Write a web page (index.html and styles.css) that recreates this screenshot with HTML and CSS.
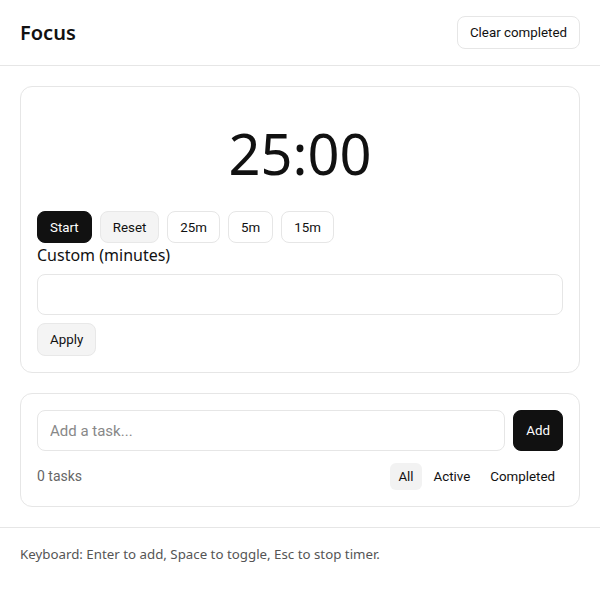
FILE: index.html
```html
<!DOCTYPE html>
<html lang="en">
<head>
<meta charset="utf-8">
<title>Focus</title>
<link rel="stylesheet" href="styles.css">
</head>
<body>
<header class="topbar">
  <h1 class="title">Focus</h1>
  <button class="btn btn-head">Clear completed</button>
</header>
<main class="main">
  <section class="card timer-card">
    <div class="timer">25:00</div>
    <div class="controls">
      <button class="btn btn-dark">Start</button>
      <button class="btn btn-gray">Reset</button>
      <button class="btn">25m</button>
      <button class="btn">5m</button>
      <button class="btn">15m</button>
    </div>
    <label class="label" for="custom">Custom (minutes)</label>
    <input class="input" id="custom" type="text">
    <div><button class="btn btn-gray btn-apply">Apply</button></div>
  </section>
  <section class="card tasks-card">
    <div class="add-row">
      <input class="input grow" type="text" placeholder="Add a task...">
      <button class="btn btn-dark tall">Add</button>
    </div>
    <div class="meta-row">
      <span class="count">0 tasks</span>
      <div class="filters">
        <button class="filter active">All</button>
        <button class="filter">Active</button>
        <button class="filter">Completed</button>
      </div>
    </div>
  </section>
</main>
<footer class="footer">Keyboard: Enter to add, Space to toggle, Esc to stop timer.</footer>
</body>
</html>
```
FILE: styles.css
```css
* { box-sizing: border-box; }
body {
  margin: 0;
  font-family: "Noto Sans", "Open Sans", sans-serif;
  color: #111;
  background: #fff;
}
.topbar {
  display: flex;
  align-items: center;
  justify-content: space-between;
  padding: 16px 20px;
  border-bottom: 1px solid #e6e6e6;
}
.title {
  margin: 0;
  font-size: 20px;
  font-weight: 600;
  line-height: 33px;
}
.btn {
  font-family: Roboto, "Noto Sans", sans-serif;
  font-size: 13.333px;
  height: 32px;
  padding: 0 12px;
  border: 1px solid #e6e6e6;
  border-radius: 8px;
  background: #fff;
  color: #111;
  cursor: pointer;
}
.btn-head { height: 33px; }
.btn-apply { height: 33px; }
.btn-dark { background: #111; border-color: #111; color: #fff; }
.btn-gray { background: #f4f4f4; border-color: #e8e8e8; }
.btn.tall { height: 41px; }
.main {
  padding: 20px;
  display: flex;
  flex-direction: column;
  gap: 20px;
}
.card {
  border: 1px solid #e6e6e6;
  border-radius: 12px;
  padding: 16px;
}
.timer-card { display: flex; flex-direction: column; }
.timer {
  height: 100px;
  line-height: 100px;
  text-align: center;
  font-size: 56px;
  margin-bottom: 8px;
}
.controls { display: flex; gap: 8px; }
.label {
  font-size: 16px;
  line-height: 22px;
  margin-top: 1px;
}
.input {
  height: 41px;
  border: 1px solid #e6e6e6;
  border-radius: 8px;
  padding: 0 12px;
  font-family: Roboto, "Noto Sans", sans-serif;
  font-size: 15px;
  color: #111;
  margin: 8px 0;
  width: 100%;
}
.input::placeholder { color: #888; }
.add-row { display: flex; gap: 8px; }
.add-row .input { margin: 0; }
.grow { flex: 1; }
.meta-row {
  display: flex;
  align-items: center;
  justify-content: space-between;
  margin-top: 11px;
  height: 28px;
}
.count {
  font-family: Roboto, "Noto Sans", sans-serif;
  font-size: 14px;
  color: #666;
}
.filters { display: flex; gap: 4px; }
.filter {
  font-family: Roboto, "Noto Sans", sans-serif;
  font-size: 13.333px;
  height: 27px;
  padding: 0 8px;
  border: none;
  border-radius: 6px;
  background: transparent;
  color: #111;
}
.filter.active { background: #f2f2f2; }
.footer {
  border-top: 1px solid #e6e6e6;
  padding: 16px 20px;
  font-size: 13.3px;
  line-height: 20px;
  color: #555;
}
```
